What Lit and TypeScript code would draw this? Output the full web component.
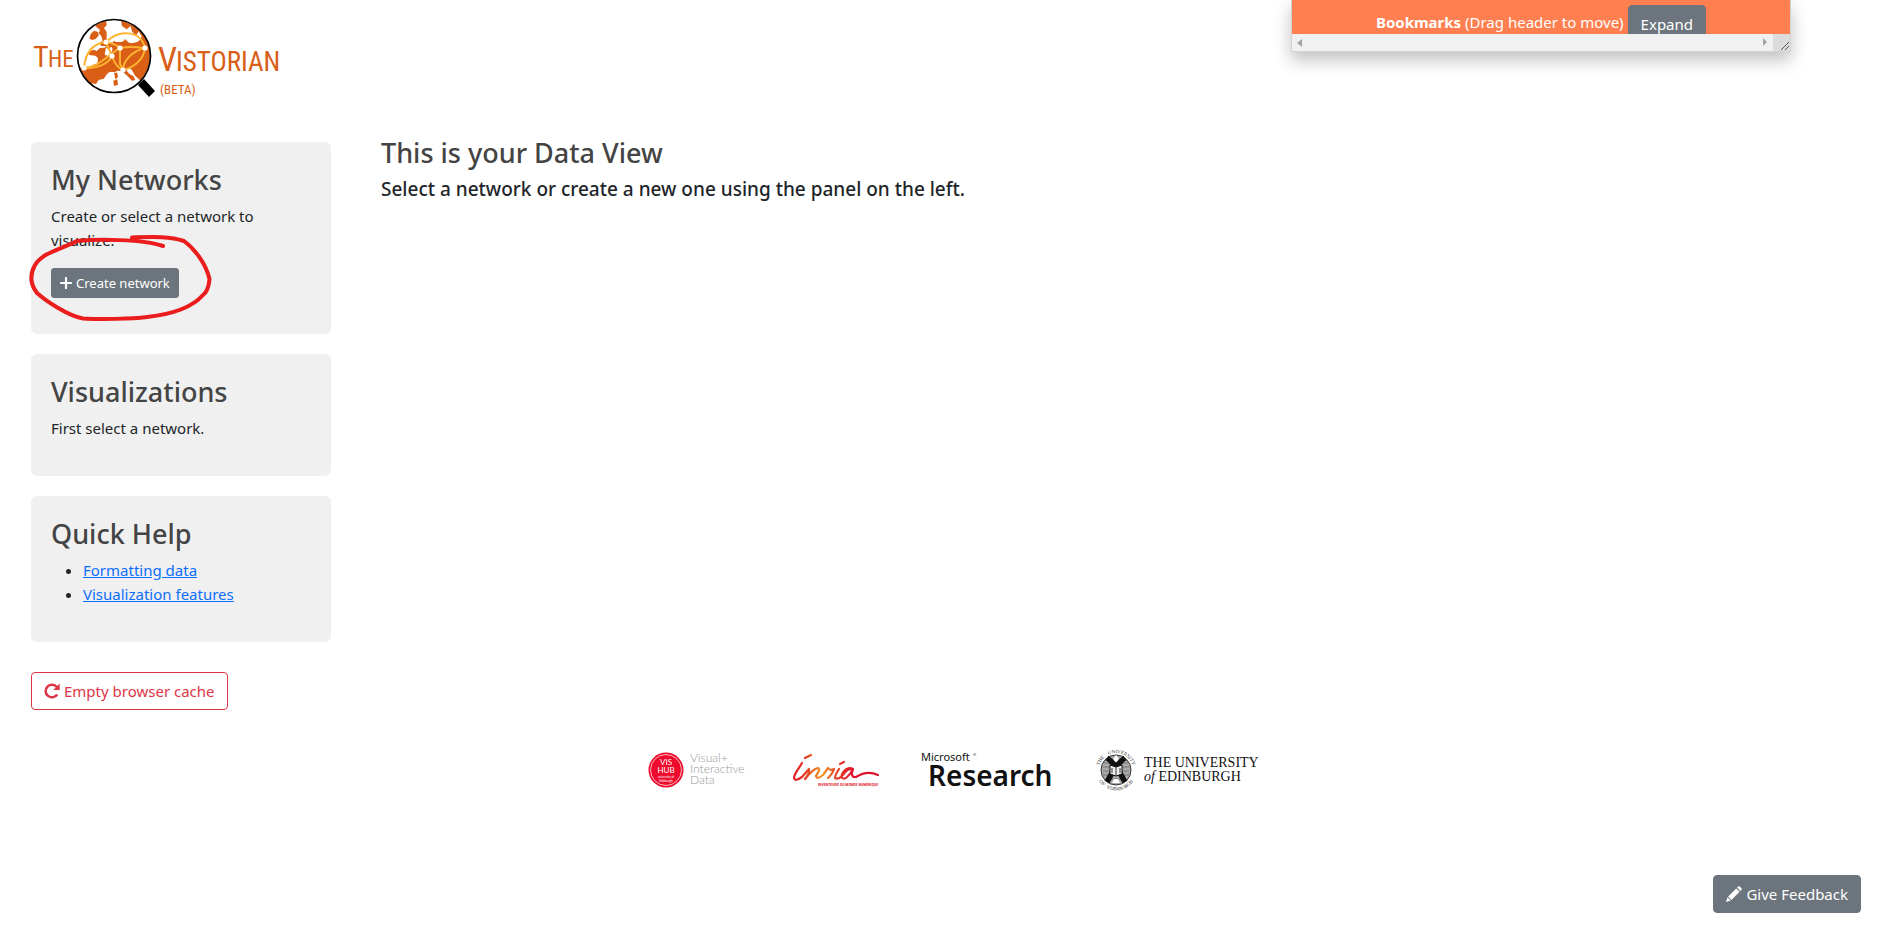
import { LitElement, html, css, svg } from "lit";
import { customElement } from "lit/decorators.js";

const vistorianLogo = svg`
<svg class="logo" viewBox="0 0 260 96" width="260" height="96" role="img" aria-label="The Vistorian (beta)">
  <defs><clipPath id="lens"><circle cx="83" cy="42" r="36"/></clipPath></defs>
  <g class="lettering">
    <text x="2" y="53" font-size="30">T</text>
    <text x="17" y="53" font-size="23">HE</text>
    <text x="127" y="57" font-size="34">V</text>
    <text x="145" y="57" font-size="27">ISTORIAN</text>
    <text x="129" y="80" font-size="13">(BETA)</text>
  </g>
  <circle cx="83" cy="42" r="36" fill="#fff"/>
  <g clip-path="url(#lens)">
    <g transform="translate(41 0) scale(.3333)" fill="#d95e16">
      <path d="M10 165 30 160 58 157 68 150 76 150 78 132 70 125 52 123 50 112 66 107 74 111 84 102 98 101 108 91 120 88 126 80 132 84 148 84 156 80 162 68 170 76 166 84 178 88 196 84 206 76 210 62 240 55V230L206 200 190 186 178 166 168 162 163 168 172 180 184 186 190 198 180 200 164 184 150 172 138 170 128 174 112 174 102 184 96 194 80 198 72 210 60 208 56 216 40 212 10 190Z"/>
      <path d="M52 74 56 60 66 50 78 54 80 64 72 74 62 78Z"/>
      <path d="M70 36 80 22 102 14 104 34 96 42 104 54 104 74 114 88 108 96 88 96 82 88 92 80 88 66 80 58 84 48Z"/>
      <path d="M146 14 176 18 206 38 222 62 208 66 200 52 192 66 180 52 176 36 164 46 150 36Z"/>
      <path d="M126 176 136 176 138 190 130 196ZM124 200 136 196 138 212 126 216Z"/>
      <path d="M102 100 108 106 118 98 122 106 116 120 108 126 98 122Z" fill="#fff"/>
      <path d="M158 58 168 56 170 72 180 74 192 68 194 76 182 82 164 80 156 72Z" fill="#fff"/>
    </g>
  </g>
  <g fill="none" stroke="#fdb32f" stroke-width="2">
    <path d="M53 54C54 39 62 29 75 28"/><path d="M53 54C66 55 77 50 81 42"/>
    <path d="M53 54C70 52 75 42 89 34"/><path d="M75 28 81 42C83 48 87 54 92 56"/>
    <path d="M75 28C88 15 110 16 114 34"/><path d="M89 34C98 32 106 33 114 34"/>
    <path d="M75 28C81 29 86 31 89 34V50L92 56"/><path d="M92 56C92 47 101 37 114 34"/>
    <path d="M92 56C104 53 113 45 114 34"/>
  </g>
  <g fill="#fff"><circle cx="53" cy="54" r="2.6"/><circle cx="75" cy="28" r="2.6"/><circle cx="81" cy="42" r="2.6"/><circle cx="89" cy="34" r="2.6"/><circle cx="114" cy="34" r="2.6"/><circle cx="92" cy="56" r="2.6"/></g>
  <circle cx="83" cy="42" r="36.5" fill="none" stroke="#000" stroke-width="1.7"/>
  <path d="M107 71 113 65 124 77 118 83Z"/>
</svg>`;

const vishubLogo = svg`
<svg width="104" height="44" viewBox="0 0 104 44" role="img" aria-label="VisHub, Visual and Interactive Data">
  <circle cx="19" cy="22" r="17.5" fill="#ee0a2c"/><circle cx="19" cy="22" r="15.5" fill="none" stroke="#fff" stroke-width=".7"/>
  <g fill="#fff" text-anchor="middle" font-family="Lato, sans-serif">
    <text x="19" y="17" font-size="8">VIS</text><text x="19" y="25" font-size="8">HUB</text>
    <text x="19" y="30" font-size="3">university of</text><text x="19" y="34" font-size="3">Edinburgh</text>
  </g>
  <g fill="#999" font-family="Lato, sans-serif" font-size="12" font-weight="300">
    <text x="43" y="14">Visual+</text><text x="43" y="25">Interactive</text><text x="43" y="36">Data</text>
  </g>
</svg>`;

const inriaLogo = svg`
<svg width="90" height="44" viewBox="0 0 90 44" role="img" aria-label="Inria">
  <defs><linearGradient id="ink" gradientUnits="userSpaceOnUse" x1="0" y1="0" x2="89" y2="0"><stop offset="0" stop-color="#e2142b"/><stop offset=".17" stop-color="#e33a22"/><stop offset=".35" stop-color="#f29b20"/><stop offset=".52" stop-color="#e5402a"/><stop offset=".7" stop-color="#df1530"/></linearGradient></defs>
  <g fill="none" stroke="url(#ink)" stroke-width="2.2" stroke-linecap="round" stroke-linejoin="round">
    <path d="M11 15C7 22 3 26 3 30Q4 34 11 29L18 21Q19 25 14 31Q22 21 27 20Q30 21 25 28Q26 32 32 27L37 20Q39 23 43 21Q42 25 37 30M48 21Q44 27 44 30Q47 32 52 27Q56 20 62 21Q56 18 51 26Q49 32 55 30Q60 26 62 21Q59 30 65 29Q76 22 87 27"/>
    <path d="M14 10 20 7"/><path d="M49 16 53 14"/>
  </g>
  <text x="27" y="38" font-family="Roboto Condensed, sans-serif" font-size="4" font-weight="700" fill="#e33240">INVENTEURS DU MONDE NUMÉRIQUE</text>
</svg>`;

const microsoftLogo = svg`
<svg width="134" height="44" viewBox="0 0 134 44" role="img" aria-label="Microsoft Research">
  <g fill="#111" font-family="Noto Sans, sans-serif">
    <text x="0" y="13" font-size="11">Microsoft</text>
    <text x="52" y="8" font-size="4">®</text>
    <text x="7" y="38" font-size="28" font-weight="600">Research</text>
  </g>
</svg>`;

const edinburghLogo = svg`
<svg width="168" height="44" viewBox="0 0 168 44" role="img" aria-label="The University of Edinburgh">
  <defs><path id="rimTop" d="M4 22A17 17 0 1 1 38 22"/><path id="rimBottom" d="M.5 22A20.500 20.500 0 0 0 41.500 22"/></defs>
  <circle cx="21" cy="22" r="15" fill="#aaa" stroke="#333"/>
  <g stroke="#555" stroke-width=".6"><path d="M12 11H30M9 15H33M8 19H34M8 23H34M8 27H34M11 31H31"/></g>
  <path d="M12 10Q20 15 30 34M30 10Q22 15 12 34" fill="none" stroke="#111" stroke-width="5.500"/>
  <path d="M15 17 21 19 27 17V26L21 28 15 26Z" fill="#eee" stroke="#111"/><path d="M21 19V28M17 20V25M25 20V25" stroke="#333" stroke-width="1"/>
  <path d="M18 11 21 7 24 11 21 14ZM17 35 19 31H23L25 35Z" fill="#fff"/>
  <g fill="#333" font-family="Liberation Serif, serif" font-size="5">
    <text><textPath href="#rimTop" startOffset="50%" text-anchor="middle">THE · UNIVERSITY</textPath></text>
    <text><textPath href="#rimBottom" startOffset="50%" text-anchor="middle">OF · EDINBURGH</textPath></text>
  </g>
  <g fill="#111" font-family="Liberation Serif, serif" font-size="14">
    <text x="49" y="19">THE UNIVERSITY</text>
    <text x="49" y="33"><tspan font-style="italic">of</tspan> EDINBURGH</text>
  </g>
</svg>`;

const plusIcon = svg`<svg class="icon" width="12" height="12" viewBox="0 0 12 12" aria-hidden="true"><path d="M6 1V11M1 6H11" stroke="currentColor" stroke-width="2.200" stroke-linecap="round"/></svg>`;
const redoIcon = svg`<svg class="icon" width="16" height="16" viewBox="0 0 16 16" aria-hidden="true"><path d="M13.200 11.500A6.300 6.300 0 1 1 12.800 4" fill="none" stroke="currentColor" stroke-width="2.500"/><path d="M15.700.5V7H9.200L11.600 4.700 13 3.300Z" fill="currentColor"/></svg>`;
const pencilIcon = svg`<svg class="icon" width="16" height="16" viewBox="0 0 16 16" fill="currentColor" aria-hidden="true"><path d="M11 1.600 12.200.4Q13 0 13.700.5L15.500 2.300Q16 3 15.600 3.800L14.400 5ZM10.200 2.400 13.600 5.800 5.500 13.900 2.100 10.500ZM1.500 11.200 4.800 14.500 0 16Z"/></svg>`;

@customElement("app-root")
export class AppRoot extends LitElement {
  static styles = css`
    :host { display: block; position: relative; min-height: 100vh; box-sizing: border-box; background: #fff; color: #212529; font: 15px/24px "Noto Sans", sans-serif; }
    * { box-sizing: border-box; }
    header { padding: 14px 31px 0; }
    .logo { display: block; }
    .lettering { fill: #d95e16; font-family: "Roboto Condensed", sans-serif; font-weight: 400; }
    .layout { display: grid; grid-template-columns: 300px minmax(0, 1fr); gap: 50px; padding: 25px 31px 0; }
    .sidebar { display: flex; flex-direction: column; align-items: flex-start; gap: 20px; padding-top: 7px; }
    .card { position: relative; width: 100%; padding: 20px; border-radius: 6px; background: #f0f0f0; }
    h1, h2 { margin: 0 0 6px; color: #444; font-size: 27px; line-height: 36px; font-weight: 500; }
    h3 { margin: 0; font-size: 19px; line-height: 24px; font-weight: 500; }
    p, ul { margin: 0 0 16px; }
    ul { padding-left: 32px; }
    a { color: #0d6efd; text-decoration: underline; }
    button { display: inline-flex; align-items: center; justify-content: center; gap: 4px; height: 38px; padding: 0 12px; border: 1px solid #6c757d; border-radius: 4px; background: #6c757d; color: #fff; font: inherit; white-space: nowrap; cursor: pointer; }
    .icon { flex: none; }
    .small { display: flex; height: 30px; margin-bottom: 16px; padding: 0 8px; border-radius: 3px; font-size: 13px; }
    .danger { margin-top: 10px; border-color: #dc3545; background: #fff; color: #dc3545; }
    .highlight { position: absolute; left: -4px; top: 88px; pointer-events: none; }
    .partners { display: flex; flex-wrap: wrap; justify-content: center; align-items: center; gap: 40px; padding: 38px 31px 38px 50px; }
    .bookmarks { position: absolute; top: 0; right: 99px; width: 500px; height: 52px; border: 1px solid #d3d3d3; border-top: 0; background: #f1f1f1; box-shadow: 0 8px 16px rgba(0, 0, 0, 0.25); overflow: hidden; }
    .bookmarks-header { display: flex; align-items: flex-start; justify-content: center; gap: 4px; height: 34px; padding-top: 5px; overflow: hidden; background: #ff7f50; color: #fff; line-height: 34px; }
    .bookmarks-header button { flex: none; }
    .scrollbar { display: flex; align-items: center; justify-content: space-between; height: 17px; padding-left: 5px; }
    .corner { margin-left: auto; }
    .feedback { position: fixed; right: 29px; bottom: 17px; }
  `;

  render() {
    return html`
      <header>${vistorianLogo}</header>
      <section class="bookmarks" aria-label="Bookmarks">
        <div class="bookmarks-header">
          <span><b>Bookmarks</b> (Drag header to move)</span>
          <button type="button">Expand</button>
        </div>
        <div class="scrollbar" aria-hidden="true">
          <svg width="5" height="8"><path d="M5 0V8L0 4Z" fill="#a3a3a3"/></svg>
          <svg class="corner" width="28" height="17"><path d="M11 0H28V17H11Z" fill="#dcdcdc"/><path d="M1 4V12L5 8Z" fill="#a3a3a3"/><path d="M19 16 27 8M23 16 27 12" stroke="#555"/></svg>
        </div>
      </section>
      <div class="layout">
        <aside class="sidebar">
          <section class="card">
            <h2>My Networks</h2>
            <p>Create or select a network to visualize.</p>
            <button class="small" type="button">${plusIcon}Create network</button>
            <svg class="highlight" width="190" height="94" viewBox="27 230 190 94" fill="none" stroke="#ea1c1c" stroke-width="4" stroke-linecap="round" stroke-linejoin="round" aria-hidden="true"><path d="M132 237.500C151 237 169 236 184 241C195 249 206 264 209.500 279C209 285 207 292 203 295C190 310 165 315 147 317C131 319 101 319.500 83 318.500C68 316 46 301 37 293C30 284 30 274 35 265C43 252 62 249 77 241C96 239 143 239 163 246"/></svg>
          </section>
          <section class="card">
            <h2>Visualizations</h2>
            <p>First select a network.</p>
          </section>
          <section class="card">
            <h2>Quick Help</h2>
            <ul>
              <li><a href="#formatting">Formatting data</a></li>
              <li><a href="#features">Visualization features</a></li>
            </ul>
          </section>
          <button class="danger" type="button">${redoIcon}Empty browser cache</button>
        </aside>
        <main>
          <h1>This is your Data View</h1>
          <h3>Select a network or create a new one using the panel on the left.</h3>
        </main>
      </div>
      <footer class="partners">${vishubLogo}${inriaLogo}${microsoftLogo}${edinburghLogo}</footer>
      <button class="feedback" type="button">${pencilIcon}Give Feedback</button>
    `;
  }
}
